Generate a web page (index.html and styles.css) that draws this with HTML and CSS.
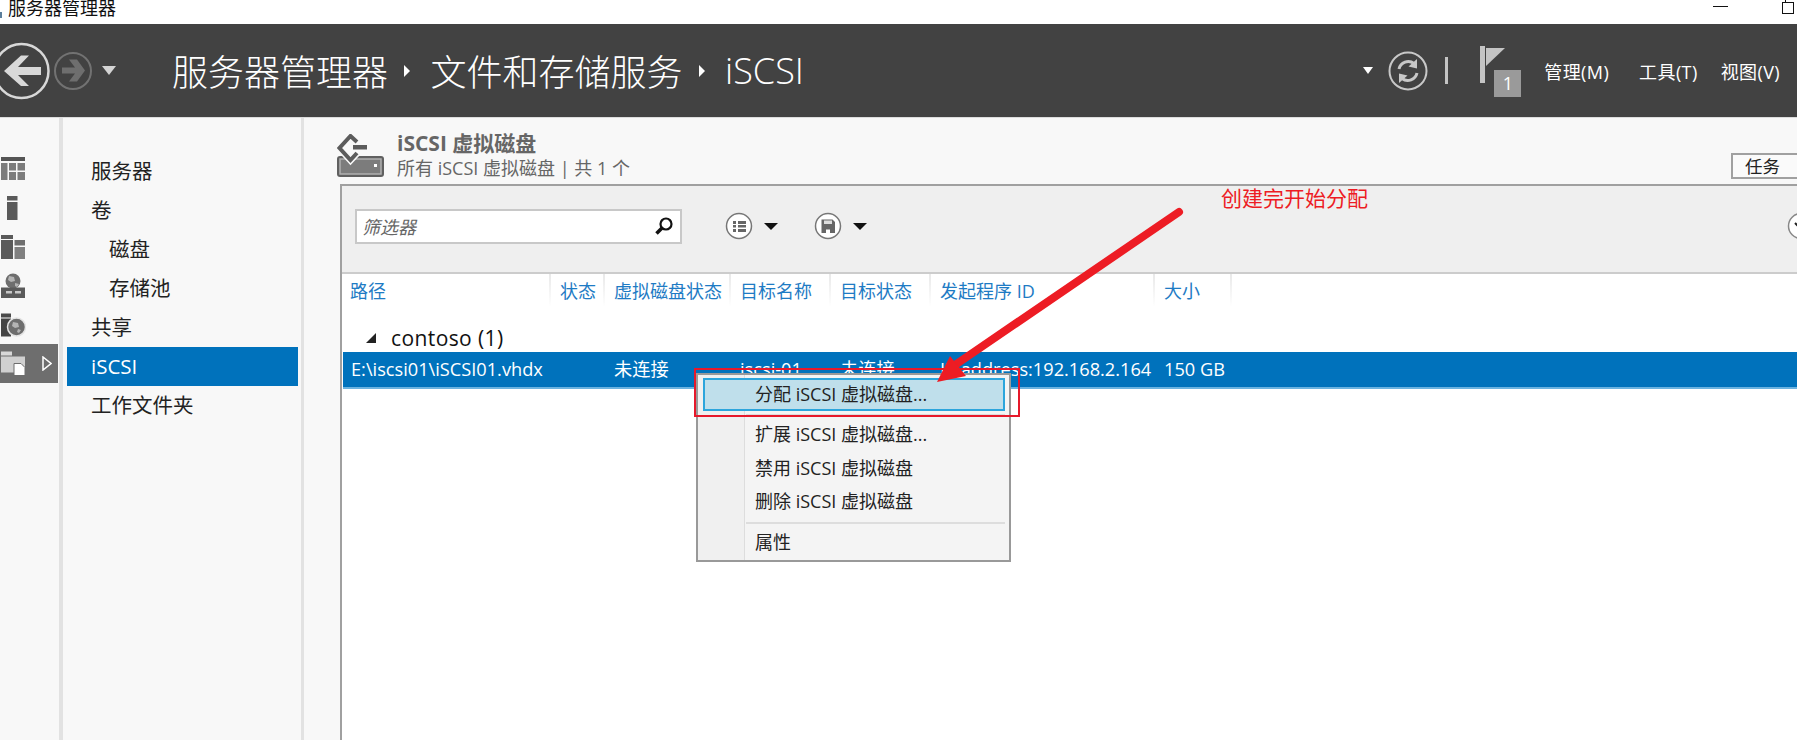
FILE: index.html
```html
<!DOCTYPE html>
<html lang="zh-CN">
<head>
    <meta charset="UTF-8">
    <title>服务器管理器</title>
    <link rel="stylesheet" href="styles.css">
</head>
<body>
    <div class="app">
        <div class="titlebar">
            <span class="title-icon"></span>
            <span class="title-text">服务器管理器</span>
            <span class="win-min"></span>
            <span class="win-restore"></span>
        </div>

        <header class="topbar">
            <svg class="back" width="60" height="60" viewBox="0 0 60 60">
                <circle cx="30.500" cy="30" r="27" fill="none" stroke="#d8d8d8" stroke-width="2.500"/>
                <path d="M13 30 L30 14.500 L38 14.500 L27 26 L50 26 L50 34 L27 34 L38 45 L30 45 Z" fill="#d8d8d8"/>
            </svg>
            <svg class="forward" width="40" height="40" viewBox="0 0 40 40">
                <circle cx="20" cy="20" r="18" fill="none" stroke="#727272" stroke-width="2"/>
                <path d="M32 19.500 L24 8.500 L16 8.500 L22 16.500 L9 16.500 L9 22.500 L22 22.500 L16 30.500 L24 30.500 Z" fill="#6e6e6e"/>
            </svg>
            <span class="caret caret-grey"></span>
            <nav class="crumbs">
                <span>服务器管理器</span>
                <i class="crumb-sep"></i>
                <span>文件和存储服务</span>
                <i class="crumb-sep"></i>
                <span>iSCSI</span>
            </nav>
            <div class="top-tools">
                <span class="caret caret-small"></span>
                <svg class="refresh" width="40" height="40" viewBox="0 0 40 40">
                    <circle cx="20" cy="20" r="18.500" fill="none" stroke="#c8c8c8" stroke-width="2"/>
                    <path d="M11 18 A9.500 9.500 0 0 1 26 12.500" fill="none" stroke="#c8c8c8" stroke-width="3"/>
                    <path d="M29 8 L29 17.500 L20.500 15.500 Z" fill="#c8c8c8"/>
                    <path d="M29 22 A9.500 9.500 0 0 1 14 27.500" fill="none" stroke="#c8c8c8" stroke-width="3"/>
                    <path d="M11 32 L11 22.500 L19.500 24.500 Z" fill="#c8c8c8"/>
                </svg>
                <span class="top-sep"></span>
                <div class="flag">
                    <svg width="28" height="38" viewBox="0 0 28 38">
                        <rect x="0" y="0" width="5" height="37" fill="#c4c4c4"/>
                        <path d="M6 2 L25 2 L6 20 Z" fill="#c4c4c4"/>
                    </svg>
                    <span class="flag-badge">1</span>
                </div>
                <a class="top-menu">管理(M)</a>
                <a class="top-menu">工具(T)</a>
                <a class="top-menu">视图(V)</a>
            </div>
        </header>

        <div class="body">
            <div class="strip">
                <div class="strip-item">
                    <svg width="26" height="24" viewBox="0 0 26 24">
                        <rect x="1" y="0" width="24" height="4" fill="#555"/>
                        <path d="M1 6h6.500v17H1zM9 6h7v7.500H9zM17.500 6h7.500v7.500h-7.500zM9 15h7v8H9zM17.500 15h7.500v8h-7.500z" fill="#7c7c7c"/>
                    </svg>
                </div>
                <div class="strip-item">
                    <svg width="26" height="24" viewBox="0 0 26 24">
                        <rect x="7" y="0" width="10.500" height="4.500" fill="#5a5a5a"/>
                        <rect x="7" y="6" width="10.500" height="18" fill="#5a5a5a"/>
                    </svg>
                </div>
                <div class="strip-item">
                    <svg width="26" height="24" viewBox="0 0 26 24">
                        <rect x="1" y="0" width="12" height="4" fill="#5a5a5a"/>
                        <rect x="1" y="5" width="12" height="19" fill="#5a5a5a"/>
                        <rect x="14.500" y="5" width="10.500" height="5.500" fill="#6e6e6e"/>
                        <rect x="14.500" y="12" width="10.500" height="12" fill="#808080"/>
                    </svg>
                </div>
                <div class="strip-item">
                    <svg width="26" height="26" viewBox="0 0 26 26">
                        <circle cx="13" cy="8" r="7.500" fill="#6e6e6e"/>
                        <path d="M9 3l5 1 1 4-4 1-3-2zM15 10l4 1-2 3-2-1z" fill="#b4b4b4"/>
                        <rect x="1" y="14.500" width="24" height="10.500" fill="#5a5a5a"/>
                        <path d="M6 18h6v2.500H6zM15 18h6v2.500h-6z" fill="#c8c8c8"/>
                    </svg>
                </div>
                <div class="strip-item">
                    <svg width="26" height="26" viewBox="0 0 26 26">
                        <rect x="1" y="1.500" width="10" height="4" fill="#4a4a4a"/>
                        <rect x="1" y="6.500" width="10" height="18" fill="#444"/>
                        <circle cx="16.500" cy="15" r="9" fill="#6e6e6e" stroke="#e4e4e4" stroke-width="1.500"/>
                        <path d="M13 10l5 1 1 4-4 1-3-2zM18 17l3 1-2 3-2-1z" fill="#b4b4b4"/>
                    </svg>
                </div>
                <div class="strip-item strip-active">
                    <svg width="26" height="26" viewBox="0 0 26 26">
                        <rect x="1" y="0.500" width="11" height="4" fill="#d8d8d8"/>
                        <rect x="1" y="5.500" width="24" height="16" fill="#d0d0d0"/>
                        <path d="M14 12.500h7l4 4v8H14z" fill="#fff" stroke="#6e6e6e"/>
                    </svg>
                    <svg class="strip-arrow" width="10" height="15" viewBox="0 0 10 15">
                        <path d="M1 1 L9 7.500 L1 14 Z" fill="none" stroke="#fff" stroke-width="1.500"/>
                    </svg>
                </div>
            </div>

            <nav class="sidebar">
                <a class="nav-item">服务器</a>
                <a class="nav-item">卷</a>
                <a class="nav-item nav-sub">磁盘</a>
                <a class="nav-item nav-sub">存储池</a>
                <a class="nav-item">共享</a>
                <a class="nav-item nav-active">iSCSI</a>
                <a class="nav-item">工作文件夹</a>
            </nav>

            <main class="content">
                <div class="page-head">
                    <svg class="page-icon" width="48" height="45" viewBox="0 0 48 45">
                        <rect x="0" y="22" width="47" height="21" rx="3" fill="#606060"/>
                        <rect x="3" y="25" width="41" height="15" fill="#7c7c7c" stroke="#b0b0b0" stroke-width="1.500"/>
                        <rect x="37" y="30" width="3" height="3" fill="#fff"/>
                        <path d="M21 6.500 L13.500 2 L2.500 14 L13.500 26 L21 18" fill="none" stroke="#f8f8f8" stroke-width="7"/>
                        <path d="M20 8 L13.500 2 L2.500 14 L13.500 26 L20 19" fill="none" stroke="#5c5c5c" stroke-width="4"/>
                        <rect x="16" y="11" width="14" height="4.500" fill="#5c5c5c"/>
                    </svg>
                    <div class="page-titles">
                        <h2>iSCSI 虚拟磁盘</h2>
                        <p>所有 iSCSI 虚拟磁盘 | 共 1 个</p>
                    </div>
                    <button class="task-btn">任务</button>
                </div>

                <section class="panel">
                    <div class="toolbar">
                        <div class="filter">
                            <span>筛选器</span>
                            <svg width="20" height="20" viewBox="0 0 20 20">
                                <circle cx="12" cy="8" r="5.500" fill="none" stroke="#111" stroke-width="2.200"/>
                                <path d="M8 12 L2.500 17.500" stroke="#111" stroke-width="3.500"/>
                            </svg>
                        </div>
                        <svg class="tool-round" width="28" height="28" viewBox="0 0 28 28">
                            <circle cx="14" cy="14" r="12.500" fill="#fff" stroke="#777" stroke-width="1.500"/>
                            <path d="M8 9h3v3H8zM13 9h8v3h-8zM8 13h3v2.500H8zM13 13h8v2.500h-8zM8 17h3v3H8zM13 17h8v3h-8z" fill="#666"/>
                        </svg>
                        <span class="caret caret-dark"></span>
                        <svg class="tool-round tool-save" width="28" height="28" viewBox="0 0 28 28">
                            <circle cx="14" cy="14" r="12.500" fill="#fff" stroke="#777" stroke-width="1.500"/>
                            <path d="M7.500 7.500h11l2.500 2.500v11H7.500z" fill="#666"/>
                            <rect x="10" y="8.500" width="8" height="3.500" fill="#ddd"/>
                            <rect x="12" y="17.500" width="4" height="3.500" fill="#fff"/>
                        </svg>
                        <span class="caret caret-dark"></span>
                        <svg class="tool-expand" width="28" height="28" viewBox="0 0 28 28">
                            <circle cx="14" cy="14" r="12.500" fill="#fff" stroke="#888" stroke-width="1.500"/>
                            <path d="M8 11 L14 17 L20 11" fill="none" stroke="#222" stroke-width="2"/>
                        </svg>
                    </div>

                    <div class="cols cols-head">
                        <span>路径</span>
                        <span>状态</span>
                        <span>虚拟磁盘状态</span>
                        <span>目标名称</span>
                        <span>目标状态</span>
                        <span>发起程序 ID</span>
                        <span>大小</span>
                    </div>

                    <div class="group-row">
                        <i class="group-arrow"></i>
                        <span>contoso (1)</span>
                    </div>

                    <div class="cols data-row">
                        <span>E:\iscsi01\iSCSI01.vhdx</span>
                        <span></span>
                        <span>未连接</span>
                        <span>iscsi-01</span>
                        <span>未连接</span>
                        <span>IP address:192.168.2.164</span>
                        <span>150 GB</span>
                    </div>
                </section>
            </main>
        </div>

        <div class="menu">
            <div class="menu-item menu-hot">分配 iSCSI 虚拟磁盘...</div>
            <div class="menu-sep menu-sep-first"></div>
            <div class="menu-item">扩展 iSCSI 虚拟磁盘...</div>
            <div class="menu-item">禁用 iSCSI 虚拟磁盘</div>
            <div class="menu-item">删除 iSCSI 虚拟磁盘</div>
            <div class="menu-sep"></div>
            <div class="menu-item">属性</div>
        </div>

        <!-- annotations drawn over the screenshot -->
        <div class="mark-box"></div>
        <div class="mark-text">创建完开始分配</div>
        <svg class="mark-arrow" width="260" height="185" viewBox="930 205 260 185">
            <path d="M1179 212 L955 365" stroke="#ed1c24" stroke-width="8" stroke-linecap="round" fill="none"/>
            <path d="M937 382 L950 356 L966 376 Z" fill="#ed1c24"/>
        </svg>
    </div>
</body>
</html>
```

FILE: styles.css
```css
* {
    box-sizing: border-box;
}

html, body {
    margin: 0;
    padding: 0;
    overflow: hidden;
}

body {
    font-family: "Open Sans", "Noto Sans CJK SC", sans-serif;
    font-size: 18px;
    color: #222;
    background-color: #fff;
}

.app {
    position: relative;
    width: 1797px;
    height: 740px;
    display: flex;
    flex-direction: column;
    overflow: hidden;
}

/* window title */
.titlebar {
    height: 24px;
    flex: none;
    display: flex;
    align-items: flex-start;
    background-color: #fff;
    overflow: hidden;
}

.title-icon {
    width: 2px;
    height: 6px;
    margin-top: 12px;
    background-color: #5c7f9c;
}

.title-text {
    margin-left: 6px;
    margin-top: -5px;
    line-height: 26px;
    color: #111;
}

.win-min {
    width: 15px;
    height: 1px;
    margin-top: 6px;
    margin-left: auto;
    background-color: #111;
}

.win-restore {
    position: relative;
    width: 12px;
    height: 12px;
    margin-top: 2px;
    margin-left: 54px;
    margin-right: 3px;
    border: 1px solid #111;
    background-color: #fff;
}

.win-restore::before {
    content: "";
    position: absolute;
    left: 2px;
    top: -4px;
    width: 12px;
    height: 3px;
    border: 1px solid #111;
    border-bottom: none;
}

/* dark bar with breadcrumb */
.topbar {
    height: 94px;
    flex: none;
    display: flex;
    align-items: center;
    background-color: #424242;
    border-bottom: 1px solid #dcdcdc;
    color: #fff;
}

.back {
    margin-left: -9px;
    flex: none;
}

.forward {
    margin-left: 2px;
    flex: none;
}

.caret {
    display: inline-block;
    width: 0;
    height: 0;
    border-style: solid;
    border-color: transparent;
    border-bottom-width: 0;
}

.caret-grey {
    margin-left: 9px;
    border-width: 9px 7.5px 0;
    border-top-color: #d4d4d4;
}

.caret-small {
    border-width: 7px 5.5px 0;
    border-top-color: #fff;
}

.caret-dark {
    margin-left: 11px;
    border-width: 7px 7.5px 0;
    border-top-color: #111;
}

.crumbs {
    margin-left: 56px;
    display: flex;
    align-items: center;
    font-size: 36px;
    font-weight: 300;
    white-space: nowrap;
}

.crumb-sep {
    width: 0;
    height: 0;
    margin: 0 20.5px 0 16px;
    border-style: solid;
    border-width: 6px 0 6px 6px;
    border-color: transparent transparent transparent #fff;
}

.top-tools {
    margin-left: auto;
    margin-right: 17px;
    display: flex;
    align-items: center;
}

.refresh {
    margin-left: 15px;
}

.top-sep {
    width: 3px;
    height: 27px;
    margin: 0 32px 0 17px;
    background-color: #c4c4c4;
}

.flag {
    position: relative;
    width: 41px;
    height: 51px;
    margin-top: 2px;
    margin-right: 23px;
}

.flag-badge {
    position: absolute;
    right: 0;
    bottom: 0;
    width: 27px;
    height: 27px;
    line-height: 26px;
    text-align: center;
    font-size: 18px;
    background-color: #9a9a9a;
    color: #fff;
}

.top-menu {
    font-size: 18px;
    letter-spacing: 0.4px;
    color: #fff;
    white-space: nowrap;
    margin-right: 30px;
}

.top-menu:nth-of-type(2) {
    margin-right: 28px;
}

.top-menu:last-child {
    margin-right: 0;
    margin-left: -5px;
}

/* page body */
.body {
    flex: 1;
    min-height: 0;
    display: flex;
    background-color: #f8f8f8;
}

.strip {
    width: 63px;
    flex: none;
    padding-top: 31px;
    border-right: 4px solid #e2e2e2;
}

.strip-item {
    width: 58px;
    height: 39px;
    display: flex;
    align-items: center;
}

.strip-active {
    background-color: #6e6e6e;
}

.strip-arrow {
    margin-left: 16px;
}

.sidebar {
    width: 241px;
    flex: none;
    padding: 34px 0 0 4px;
    border-right: 3px solid #e2e2e2;
}

.nav-item {
    display: block;
    width: 231px;
    height: 39px;
    line-height: 39.5px;
    padding-left: 24px;
    font-size: 20.5px;
    color: #222;
}

.nav-sub {
    padding-left: 42px;
}

.nav-active {
    background-color: #0072bc;
    color: #fff;
}

.content {
    flex: 1;
    min-width: 0;
    padding-left: 36px;
}

.page-head {
    height: 66px;
    display: flex;
    align-items: flex-start;
    padding-top: 16px;
}

.page-icon {
    margin-left: -3px;
    flex: none;
}

.page-titles {
    margin-left: 12px;
    margin-top: -4px;
}

.page-titles h2 {
    margin: 0;
    font-size: 21px;
    line-height: 26px;
    font-weight: 700;
    color: #666;
}

.page-titles p {
    margin: 0;
    font-size: 18px;
    line-height: 24px;
    color: #666;
}

.task-btn {
    margin-left: auto;
    margin-right: -20px;
    margin-top: 19px;
    width: 86px;
    height: 26px;
    padding: 0 0 0 12px;
    text-align: left;
    font: inherit;
    font-size: 17.5px;
    line-height: 20px;
    color: #222;
    background-color: #fafafa;
    border: 2px solid #a0a0a0;
}

/* list panel */
.panel {
    height: 556px;
    border-top: 2px solid #a0a0a0;
    border-left: 2px solid #a0a0a0;
    background-color: #fff;
}

.toolbar {
    height: 88px;
    display: flex;
    align-items: center;
    padding: 0 0 6px 13px;
    background-color: #efefef;
    border-bottom: 2px solid #ccc;
}

.filter {
    width: 327px;
    height: 35px;
    display: flex;
    align-items: center;
    justify-content: space-between;
    padding: 0 6px 0 5px;
    background-color: #fff;
    border: 2px solid #c8c8c8;
    font-style: italic;
    color: #666;
}

.tool-round {
    margin-left: 43px;
    flex: none;
}

.tool-save {
    margin-left: 36px;
}

.tool-expand {
    margin-left: auto;
    margin-right: -18px;
    flex: none;
}

.cols {
    display: grid;
    grid-template-columns: 207px 54px 126px 100px 100px 224px 77px;
    margin-left: 1px;
}

.cols span {
    padding-left: 10px;
    white-space: nowrap;
}

.cols span:first-child {
    padding-left: 8px;
}

.cols-head {
    height: 34px;
    margin-left: 2px;
    color: #1e7bc4;
    line-height: 34px;
}

.cols-head span {
    padding-left: 9px;
    height: 32px;
    border-right: 2px solid #eee;
    border-image: linear-gradient(#e8e8e8, #fff) 1;
}

.cols-head span:first-child {
    padding-left: 6px;
}

.group-row {
    height: 44px;
    display: flex;
    align-items: center;
    padding: 15px 0 0 24px;
    font-size: 21px;
    letter-spacing: 0.4px;
    color: #111;
}

.group-arrow {
    width: 0;
    height: 0;
    margin-right: 15px;
    border-style: solid;
    border-width: 0 0 10px 10px;
    border-color: transparent transparent #222 transparent;
}

.data-row {
    height: 37px;
    font-size: 18.2px;
    line-height: 34px;
    color: #fff;
    background-color: #0072bc;
    border-bottom: 2px solid #6bb3e0;
}

/* context menu */
.menu {
    position: absolute;
    left: 696px;
    top: 373px;
    width: 315px;
    height: 189px;
    padding: 3px 4px 0 5px;
    border: 2px solid #999;
    background: linear-gradient(to right, #f0f0f0 46px, #ddd 46px, #ddd 47px, #f4f4f4 47px);
}

.menu-item {
    height: 33.500px;
    line-height: 33.500px;
    padding-left: 52px;
    color: #222;
    white-space: nowrap;
}

.menu-hot {
    height: 33px;
    line-height: 29px;
    padding-left: 50px;
    background-color: #bfdfeb;
    border: 2px solid #2ca5dc;
}

.menu-sep {
    height: 2px;
    margin: 3px 0 2px 43px;
    background-color: #ddd;
}

.menu-sep-first {
    margin: 3px 0 3px 43px;
    height: 1px;
}

/* red annotations */
.mark-box {
    position: absolute;
    left: 694px;
    top: 368px;
    width: 326px;
    height: 49px;
    border: 2px solid #e6192b;
}

.mark-text {
    position: absolute;
    left: 1221px;
    top: 184px;
    font-size: 21px;
    line-height: 28px;
    color: #ed1c24;
}

.mark-arrow {
    position: absolute;
    left: 930px;
    top: 205px;
}
```
